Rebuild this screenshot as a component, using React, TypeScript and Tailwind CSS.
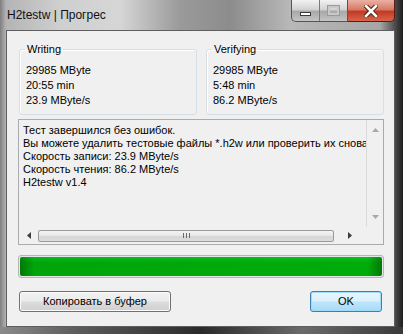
export default function App() {
  return (
    <div className="w-[403px] h-[334px] overflow-hidden flex flex-col bg-[linear-gradient(90deg,#7e7e7e_0px,#b4b4b4_6px,#cfcfcf_60px,#d6d6d6_120px,#9a9a9a_180px,#8c8c8c_230px,#b8b8b8_290px,#a6a6a6_380px,#3a3a3a_398px,#1e1e1e_403px)] font-['Liberation_Sans',sans-serif]">
      {/* Title bar */}
      <div className="h-[30px] shrink-0 flex items-start">
        <div className="pl-[7px] pt-[8px] text-[12px] leading-[15px] text-[#111]">H2testw | Прогрес</div>
        <div className="ml-auto mr-[8px] flex h-[22px]">
          <div className="flex border border-t-0 border-[#555] rounded-bl-[5px] bg-[linear-gradient(180deg,#f2f2f2,#d2d2d2_45%,#a9a9a9_55%,#c4c4c4)] overflow-hidden">
            <div className="w-[28px] h-full flex items-end justify-center pb-[5px] border-r border-[#7a7a7a]">
              <div className="w-[11px] h-[4px] bg-white border border-[#3a3a3a]" />
            </div>
            <div className="w-[27px] h-full flex items-center justify-center">
              <div className="w-[11px] h-[9px] border-2 border-[#c8c8c8] bg-transparent shadow-[0_0_0_1px_#9a9a9a]" />
            </div>
          </div>
          <div className="w-[47px] h-full flex items-center justify-center border border-t-0 border-l-0 border-[#5a1d12] rounded-br-[5px] bg-[linear-gradient(180deg,#eab1a4,#d77a66_45%,#c13a24_55%,#d8654a)]">
            <svg width="14" height="12" viewBox="0 0 14 12">
              <path d="M2 1 L12 11 M12 1 L2 11" stroke="#4a1a10" strokeWidth="4.5" strokeLinecap="square" />
              <path d="M2 1 L12 11 M12 1 L2 11" stroke="#ffffff" strokeWidth="2.6" strokeLinecap="square" />
            </svg>
          </div>
        </div>
      </div>

      {/* Client area */}
      <div className="ml-[6px] w-[389px] h-[297px] shrink-0 border border-[#5e5e5e] bg-[#f0f0f0] pt-[12px] pl-[12px] pr-[10px] text-[11px] text-black">
        <div className="flex gap-[9px]">
          <GroupBox title="Writing" lines={["29985 MByte", "20:55 min", "23.9 MByte/s"]} />
          <GroupBox title="Verifying" lines={["29985 MByte", "5:48 min", "86.2 MByte/s"]} />
        </div>

        {/* Log memo */}
        <div className="mt-[4px] -ml-[1px] w-[366px] h-[126px] border border-[#a9abb1] bg-[#f0f0f0] flex flex-col">
          <div className="flex flex-1 min-h-0">
            <div className="flex-1 min-w-0 overflow-hidden pl-[4px] pt-[4px] leading-[13px] whitespace-nowrap">
              <div>Тест завершился без ошибок.</div>
              <div>Вы можете удалить тестовые файлы *.h2w или проверить их снова.</div>
              <div>Скорость записи: 23.9 MByte/s</div>
              <div>Скорость чтения: 86.2 MByte/s</div>
              <div>H2testw v1.4</div>
            </div>
            <div className="w-[17px] border-l border-[#dcdcdc] flex flex-col items-center justify-between py-[8px]">
              <svg width="7" height="4" viewBox="0 0 7 4"><path d="M0 4 L3.5 0 L7 4Z" fill="#a8a8a8" /></svg>
              <svg width="7" height="4" viewBox="0 0 7 4"><path d="M0 0 L3.5 4 L7 0Z" fill="#a8a8a8" /></svg>
            </div>
          </div>
          <div className="h-[17px] flex items-center">
            <div className="w-[19px] flex justify-center">
              <svg width="4" height="7" viewBox="0 0 4 7"><path d="M4 0 L0 3.5 L4 7Z" fill="#3c3c3c" /></svg>
            </div>
            <div className="w-[296px] h-[12px] rounded-[2px] border border-[#9a9a9a] bg-[linear-gradient(180deg,#f4f4f4,#e6e6e6_50%,#d6d6d6_51%,#dcdcdc)] flex items-center justify-center gap-[2px]">
              <div className="w-px h-[5px] bg-[#6a6a6a]" />
              <div className="w-px h-[5px] bg-[#6a6a6a]" />
              <div className="w-px h-[5px] bg-[#6a6a6a]" />
            </div>
            <div className="flex-1 flex justify-center">
              <svg width="4" height="7" viewBox="0 0 4 7"><path d="M0 0 L4 3.5 L0 7Z" fill="#3c3c3c" /></svg>
            </div>
            <div className="w-[17px] h-full" />
          </div>
        </div>

        {/* Progress bar */}
        <div className="mt-[10px] -ml-[1px] w-[366px] h-[23px] rounded-[3px] border border-[#b5b5b5] bg-[#e6e6e6] p-px">
          <div className="w-full h-full rounded-[2px] bg-[linear-gradient(90deg,#0a8f1c,#05c42a_4%,#05cc2c_96%,#0a8f1c),linear-gradient(180deg,#b8f5b0,#1fd63c_30%)] bg-blend-multiply" />
        </div>

        {/* Buttons */}
        <div className="mt-[13px] flex justify-between pr-[2px]">
          <button className="w-[152px] h-[21px] rounded-[3px] border border-[#707070] bg-[linear-gradient(180deg,#f2f2f2,#ebebeb_48%,#dddddd_52%,#cfcfcf)] text-[11px] leading-none shadow-[inset_0_0_0_1px_#fcfcfc]">
            Копировать в буфер
          </button>
          <button className="w-[72px] h-[21px] rounded-[3px] border border-[#3c7fb1] bg-[linear-gradient(180deg,#eaf6fd,#d9f0fc_48%,#bee6fd_52%,#a7d9f5)] text-[11px] leading-none shadow-[inset_0_0_0_1px_#9fdcfb]">
            OK
          </button>
        </div>
      </div>
      <div className="flex-1 bg-[linear-gradient(90deg,#8a8a8a,#5a5a5a_20%,#2a2a2a_50%,#6a6a6a_75%,#3a3a3a)]" />
    </div>
  );
}

function GroupBox({ title, lines }: { title: string; lines: string[] }) {
  return (
    <fieldset className="w-[178px] h-[72px] border border-[#d5dfe5] rounded-[3px] pl-[6px] shadow-[inset_1px_1px_0_#ffffff]">
      <legend className="px-[2px] -ml-[1px] leading-[13px] text-[11px]">{title}</legend>
      <div className="pt-[7px] leading-[15px]">
        {lines.map((l) => (
          <div key={l}>{l}</div>
        ))}
      </div>
    </fieldset>
  );
}
